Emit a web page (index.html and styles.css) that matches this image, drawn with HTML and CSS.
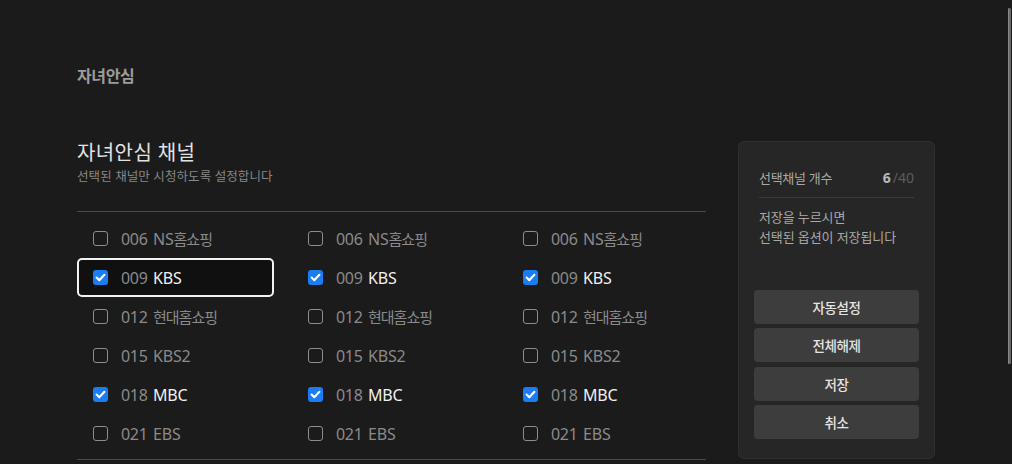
FILE: index.html
```html
<!DOCTYPE html>
<html lang="ko">
<head>
<meta charset="utf-8">
<title>자녀안심</title>
<link rel="stylesheet" href="styles.css">
</head>
<body>
<div class="page">
  <h1 class="crumb">자녀안심</h1>
  <div class="content">
    <section class="channels">
      <h2 class="title">자녀안심 채널</h2>
      <p class="desc">선택된 채널만 시청하도록 설정합니다</p>
      <div class="grid">
        <div class="item"><span class="cb"></span><span class="num">006</span><span class="name">NS<span class="ko">홈쇼핑</span></span></div>
        <div class="item"><span class="cb"></span><span class="num">006</span><span class="name">NS<span class="ko">홈쇼핑</span></span></div>
        <div class="item"><span class="cb"></span><span class="num">006</span><span class="name">NS<span class="ko">홈쇼핑</span></span></div>

        <div class="item checked focus"><span class="cb"><svg viewBox="0 0 15 15"><path d="M3.6 7.6 L6.3 10.2 L11.4 4.8"/></svg></span><span class="num">009</span><span class="name">KBS</span></div>
        <div class="item checked"><span class="cb"><svg viewBox="0 0 15 15"><path d="M3.6 7.6 L6.3 10.2 L11.4 4.8"/></svg></span><span class="num">009</span><span class="name">KBS</span></div>
        <div class="item checked"><span class="cb"><svg viewBox="0 0 15 15"><path d="M3.6 7.6 L6.3 10.2 L11.4 4.8"/></svg></span><span class="num">009</span><span class="name">KBS</span></div>

        <div class="item"><span class="cb"></span><span class="num">012</span><span class="name"><span class="ko">현대홈쇼핑</span></span></div>
        <div class="item"><span class="cb"></span><span class="num">012</span><span class="name"><span class="ko">현대홈쇼핑</span></span></div>
        <div class="item"><span class="cb"></span><span class="num">012</span><span class="name"><span class="ko">현대홈쇼핑</span></span></div>

        <div class="item"><span class="cb"></span><span class="num">015</span><span class="name">KBS2</span></div>
        <div class="item"><span class="cb"></span><span class="num">015</span><span class="name">KBS2</span></div>
        <div class="item"><span class="cb"></span><span class="num">015</span><span class="name">KBS2</span></div>

        <div class="item checked"><span class="cb"><svg viewBox="0 0 15 15"><path d="M3.6 7.6 L6.3 10.2 L11.4 4.8"/></svg></span><span class="num">018</span><span class="name">MBC</span></div>
        <div class="item checked"><span class="cb"><svg viewBox="0 0 15 15"><path d="M3.6 7.6 L6.3 10.2 L11.4 4.8"/></svg></span><span class="num">018</span><span class="name">MBC</span></div>
        <div class="item checked"><span class="cb"><svg viewBox="0 0 15 15"><path d="M3.6 7.6 L6.3 10.2 L11.4 4.8"/></svg></span><span class="num">018</span><span class="name">MBC</span></div>

        <div class="item"><span class="cb"></span><span class="num">021</span><span class="name">EBS</span></div>
        <div class="item"><span class="cb"></span><span class="num">021</span><span class="name">EBS</span></div>
        <div class="item"><span class="cb"></span><span class="num">021</span><span class="name">EBS</span></div>
      </div>
    </section>
    <aside class="panel">
      <div class="count-row">
        <span class="count-label">선택채널 개수</span>
        <span class="count"><b>6</b><span class="total">/40</span></span>
      </div>
      <p class="note">저장을 누르시면<br>선택된 옵션이 저장됩니다</p>
      <div class="buttons">
        <button class="btn">자동설정</button>
        <button class="btn">전체해제</button>
        <button class="btn">저장</button>
        <button class="btn">취소</button>
      </div>
    </aside>
  </div>
</div>
<div class="scrollbar"></div>
</body>
</html>
```

FILE: styles.css
```css
html, body {
  margin: 0;
  padding: 0;
  background: #1b1b1b;
  height: 100%;
  overflow: hidden;
}
body {
  font-family: "Noto Sans", "Noto Sans CJK KR", sans-serif;
  color: #ddd;
}
.page {
  padding: 64px 0 0 77px;
}
.crumb {
  margin: 0;
  font-size: 16px;
  line-height: 24px;
  font-weight: 700;
  color: #9c9c9c;
  letter-spacing: -0.4px;
}
.content {
  display: flex;
  align-items: flex-start;
  gap: 32px;
  margin-top: 52px;
}
.channels {
  width: 629px;
}
.title {
  margin: 0;
  font-size: 20px;
  line-height: 26px;
  font-weight: 400;
  color: #e2e2e2;
  letter-spacing: 0.4px;
}
.desc {
  margin: 1.5px 0 0;
  font-size: 12.5px;
  line-height: 18px;
  color: #878787;
  letter-spacing: 0.1px;
}
.grid {
  margin-top: 25.5px;
  border-top: 1px solid #4a4a4a;
  border-bottom: 1px solid #4a4a4a;
  padding: 7px 0 6px;
  display: grid;
  grid-template-columns: repeat(3, 197px);
  grid-auto-rows: 39px;
  column-gap: 18px;
}
.item {
  box-sizing: border-box;
  display: flex;
  align-items: center;
  padding-left: 14px;
  border: 2px solid transparent;
  border-radius: 5px;
  font-size: 16px;
  color: #8a8a8a;
}
.item.focus {
  border-color: #f2f2f2;
  background: #101010;
}
.item .cb {
  box-sizing: border-box;
  width: 15px;
  height: 15px;
  border: 1.6px solid #8d8d8d;
  border-radius: 3px;
  flex: none;
  display: flex;
}
.item.checked .cb {
  border: none;
  background: #1a7df3;
}
.cb svg {
  width: 15px;
  height: 15px;
}
.cb svg path {
  fill: none;
  stroke: #fff;
  stroke-width: 2.1;
  stroke-linecap: round;
  stroke-linejoin: round;
}
.num {
  margin-left: 13px;
  width: 32px;
  flex: none;
  letter-spacing: -0.3px;
}
.name {
  letter-spacing: -0.2px;
}
.name .ko {
  font-size: 15px;
  letter-spacing: -1px;
}
.item.checked .name {
  color: #f0f0f0;
}
.panel {
  box-sizing: border-box;
  width: 197px;
  height: 318px;
  margin-top: 1px;
  background: #262626;
  border: 1px solid #2f2f2f;
  border-radius: 6px;
  padding: 25px 20px 19px 20px;
  display: flex;
  flex-direction: column;
}
.count-row {
  display: flex;
  justify-content: space-between;
  align-items: center;
  height: 20px;
  padding-bottom: 10px;
  border-bottom: 1px solid #3a3a3a;
  font-size: 13px;
  color: #a8a8a8;
}
.count-label {
  letter-spacing: -0.3px;
}
.count b {
  font-weight: 700;
  color: #b8b8b8;
  font-size: 14px;
}
.count .total {
  color: #5c5c5c;
  font-size: 14px;
  margin-left: 2px;
}
.note {
  margin: 9px 0 0;
  font-size: 13px;
  line-height: 20px;
  color: #a8a8a8;
  letter-spacing: -0.1px;
}
.buttons {
  margin: auto -5px 0 -5px;
  display: flex;
  flex-direction: column;
  gap: 4.5px;
}
.btn {
  height: 34px;
  border: none;
  border-radius: 4px;
  background: #3d3d3d;
  color: #e4e4e4;
  font-family: "Noto Sans", "Noto Sans CJK KR", sans-serif;
  font-size: 13.5px;
  font-weight: 500;
  letter-spacing: -0.4px;
  padding: 0;
}
.scrollbar {
  position: absolute;
  top: 8px;
  left: 1008px;
  width: 3px;
  height: 356px;
  border-radius: 2px;
  background: #6a6a6a;
  box-shadow: inset 1px 0 0 #888;
}
```
